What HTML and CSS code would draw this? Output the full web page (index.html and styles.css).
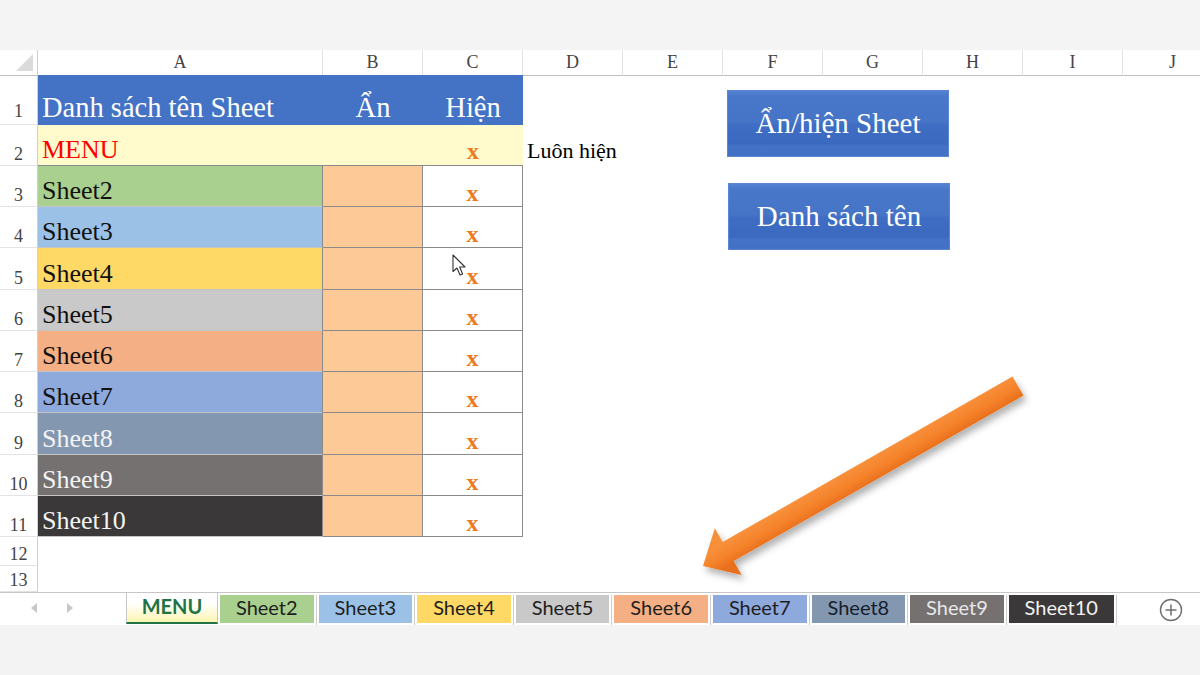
FILE: index.html
```html
<!DOCTYPE html>
<html lang="vi">
<head>
<meta charset="utf-8">
<title>Ẩn/hiện Sheet</title>
<link rel="stylesheet" href="styles.css">
</head>
<body>
<div class="app">
  <div class="topband"></div>
  <div class="sheet">
    <div class="colhead">
      <div class="corner"><span class="tri"></span></div>
      <div class="ch">A</div><div class="ch">B</div><div class="ch">C</div><div class="ch">D</div><div class="ch">E</div>
      <div class="ch">F</div><div class="ch">G</div><div class="ch">H</div><div class="ch">I</div><div class="ch">J</div>
    </div>

    <div class="row r1">
      <div class="rh">1</div>
      <div class="c a hd">Danh sách tên Sheet</div>
      <div class="c hd center">Ẩn</div>
      <div class="c hd center">Hiện</div>
      <div class="c"></div>
    </div>

    <div class="row r2">
      <div class="rh">2</div>
      <div class="c a y menu">MENU</div>
      <div class="c y"></div>
      <div class="c y center"><span class="x x2">x</span></div>
      <div class="c"><span class="note">Luôn hiện</span></div>
    </div>

    <div class="row tr"><div class="rh">3</div><div class="c a s2">Sheet2</div><div class="c b"></div><div class="c cc"><span class="x">x</span></div><div class="c"></div></div>
    <div class="row tr"><div class="rh">4</div><div class="c a s3">Sheet3</div><div class="c b"></div><div class="c cc"><span class="x">x</span></div><div class="c"></div></div>
    <div class="row tr"><div class="rh">5</div><div class="c a s4">Sheet4</div><div class="c b"></div><div class="c cc"><span class="x">x</span></div><div class="c"></div></div>
    <div class="row tr"><div class="rh">6</div><div class="c a s5">Sheet5</div><div class="c b"></div><div class="c cc"><span class="x">x</span></div><div class="c"></div></div>
    <div class="row tr"><div class="rh">7</div><div class="c a s6">Sheet6</div><div class="c b"></div><div class="c cc"><span class="x">x</span></div><div class="c"></div></div>
    <div class="row tr"><div class="rh">8</div><div class="c a s7">Sheet7</div><div class="c b"></div><div class="c cc"><span class="x">x</span></div><div class="c"></div></div>
    <div class="row tr"><div class="rh">9</div><div class="c a s8">Sheet8</div><div class="c b"></div><div class="c cc"><span class="x">x</span></div><div class="c"></div></div>
    <div class="row tr"><div class="rh">10</div><div class="c a s9">Sheet9</div><div class="c b"></div><div class="c cc"><span class="x">x</span></div><div class="c"></div></div>
    <div class="row tr"><div class="rh">11</div><div class="c a s10">Sheet10</div><div class="c b"></div><div class="c cc"><span class="x">x</span></div><div class="c"></div></div>

    <div class="row r12"><div class="rh">12</div></div>
    <div class="row r13"><div class="rh">13</div></div>

    <div class="btn btn1">Ẩn/hiện Sheet</div>
    <div class="btn btn2">Danh sách tên</div>
  </div>

  <div class="tabbar">
    <div class="nav"><span class="navl"></span><span class="navr"></span></div>
    <div class="tab active">MENU</div>
    <div class="tab t2 first">Sheet2</div><span class="sep"></span>
    <div class="tab t3">Sheet3</div><span class="sep"></span>
    <div class="tab t4">Sheet4</div><span class="sep"></span>
    <div class="tab t5">Sheet5</div><span class="sep"></span>
    <div class="tab t6">Sheet6</div><span class="sep"></span>
    <div class="tab t7">Sheet7</div><span class="sep"></span>
    <div class="tab t8">Sheet8</div><span class="sep"></span>
    <div class="tab t9">Sheet9</div><span class="sep"></span>
    <div class="tab t10 wide">Sheet10</div><span class="sep"></span>
    <div class="plus">
      <svg width="24" height="24" viewBox="0 0 24 24"><circle cx="12" cy="12" r="10.5" fill="none" stroke="#6e6e6e" stroke-width="1.4"/><path d="M12 6.5V17.5M6.5 12H17.5" stroke="#6e6e6e" stroke-width="1.5"/></svg>
    </div>
  </div>
  <div class="bottomband"></div>

  <svg class="arrow" width="1200" height="675" viewBox="0 0 1200 675">
    <defs>
      <filter id="sh" x="-10%" y="-10%" width="130%" height="140%">
        <feDropShadow dx="3" dy="5" stdDeviation="3.5" flood-color="#000" flood-opacity="0.3"/>
      </filter>
      <linearGradient id="ag" gradientUnits="userSpaceOnUse" x1="1012.5" y1="376.5" x2="1023.5" y2="395.5">
        <stop offset="0" stop-color="#f88f3a"/>
        <stop offset="0.55" stop-color="#f5822a"/>
        <stop offset="1" stop-color="#e86f1c"/>
      </linearGradient>
    </defs>
    <polygon filter="url(#sh)" fill="url(#ag)" points="1012.5,376.5 722.7,542.1 714.8,528.2 703,566 741.6,575 733.7,561.1 1023.5,395.5"/>
  </svg>

  <svg class="cursor" width="16" height="23" viewBox="0 0 16 23">
    <path d="M1 1 L1 17.5 L5 14 L8 21 L10.6 20 L7.7 13 L13 13 Z" fill="#fff" stroke="#333" stroke-width="1.1" stroke-linejoin="round"/>
  </svg>
</div>
</body>
</html>
```

FILE: styles.css
```css
* { box-sizing: border-box; }

body {
  margin: 0;
  width: 1200px;
  height: 675px;
  overflow: hidden;
  background: #f4f4f4;
  font-family: "Liberation Serif", "Times New Roman", serif;
}

.app {
  position: relative;
  width: 1200px;
  height: 675px;
  display: flex;
  flex-direction: column;
}

.topband { height: 50px; flex: none; background: #f4f4f4; }
.bottomband { flex: 1; background: #f3f3f3; }

.sheet {
  position: relative;
  height: 542px;
  flex: none;
  background: #fff;
  overflow: hidden;
}

/* column header */
.colhead {
  display: grid;
  grid-template-columns: 38px 285px repeat(9, 100px);
  height: 25px;
}
.corner {
  display: flex;
  justify-content: flex-end;
  align-items: flex-end;
  padding: 0 4px 4px 0;
  border-right: 1px solid #cfcfcf;
  border-bottom: 1px solid #bdbdbd;
}
.tri {
  width: 17px;
  height: 17px;
  background: #dadada;
  clip-path: polygon(100% 0, 100% 100%, 0 100%);
}
.ch {
  border-right: 1px solid #e3e3e3;
  border-bottom: 1px solid #bdbdbd;
  text-align: center;
  font-size: 18px;
  line-height: 25px;
  color: #444;
}

/* rows */
.row {
  display: grid;
  grid-template-columns: 38px 285px 100px 100px 1fr;
}
.rh {
  display: flex;
  align-items: flex-end;
  justify-content: center;
  border-right: 1px solid #cfcfcf;
  border-bottom: 1px solid #e3e3e3;
  font-size: 18px;
  line-height: 1;
  color: #444;
  padding-bottom: 2px;
}
.c {
  display: flex;
  align-items: flex-end;
  line-height: 1;
  white-space: nowrap;
}
.center { justify-content: center; }
.a { padding-left: 4px; }

.r1 { height: 50px; }
.r1 .rh { padding-bottom: 4px; }
.hd {
  background: #4472c4;
  color: #fff;
  font-size: 28.5px;
  padding-bottom: 3px;
}

.r2 { height: 41px; }
.y {
  background: #fffbcc;
  border-bottom: 1px solid #8a8a8a;
}
.menu {
  color: #ff0000;
  font-size: 26px;
  padding-bottom: 2px;
}
.x {
  color: #ee7b22;
  font-weight: bold;
  font-size: 24px;
}
.x2 { padding-bottom: 2px; }
.note {
  font-size: 22px;
  padding-left: 4px;
  padding-bottom: 4px;
}

.tr { height: 41.22px; }
.tr .a {
  font-size: 26px;
  color: #111;
  padding-bottom: 2px;
  border-right: 1px solid #8a8a8a;
  border-bottom: 1px solid #c4c4c4;
}
.tr .b {
  background: #fdc996;
  border-right: 1px solid #8a8a8a;
  border-bottom: 1px solid #8a8a8a;
}
.tr .cc {
  justify-content: center;
  padding-bottom: 1px;
  border-right: 1px solid #8a8a8a;
  border-bottom: 1px solid #8a8a8a;
}
.s2 { background: #a9d08e; }
.s3 { background: #9bc2e6; }
.s4 { background: #ffd966; }
.s5 { background: #c9c9c9; }
.s6 { background: #f4b084; }
.s7 { background: #8ea9db; }
.tr .s8 { background: #8497b0; color: #f4f4f4; }
.tr .s9 { background: #757171; color: #f4f4f4; }
.tr .s10 { background: #3a3838; color: #f4f4f4; }

.r12 { height: 29px; }
.r13 { height: 26px; }

/* floating buttons (shapes over the sheet) */
.btn {
  position: absolute;
  width: 222px;
  height: 67px;
  display: flex;
  align-items: center;
  justify-content: center;
  color: #fff;
  font-size: 29px;
  border: 1px solid #5a86d2;
  background: linear-gradient(180deg, #5382d2 0%, #4877ca 9%, #4675c8 47%, #3f6dc3 52%, #3b69c0 81%, #4472c7 85%, #4170c5 100%);
}
.btn1 { left: 727px; top: 40px; }
.btn2 { left: 728px; top: 133px; }

/* tab bar */
.tabbar {
  height: 33px;
  flex: none;
  display: flex;
  background: #fff;
  border-top: 1px solid #c6c6c6;
  font-family: Lato, "Open Sans", sans-serif;
}
.nav {
  width: 126px;
  display: flex;
  align-items: center;
  padding-left: 31px;
  padding-bottom: 2px;
  gap: 30px;
}
.navl {
  width: 0; height: 0;
  border-top: 5px solid transparent;
  border-bottom: 5px solid transparent;
  border-right: 6px solid #c8c8c8;
}
.navr {
  width: 0; height: 0;
  border-top: 5px solid transparent;
  border-bottom: 5px solid transparent;
  border-left: 6px solid #c8c8c8;
}
.tab {
  width: 93.6px;
  height: 28px;
  margin-top: 2px;
  padding-bottom: 4px;
  display: flex;
  align-items: center;
  justify-content: center;
  font-size: 20px;
  color: #1e1e1e;
  white-space: nowrap;
}
.tab.wide { width: 105px; }
.tab.active {
  width: 92px;
  height: 31px;
  margin-top: 0;
  padding-bottom: 3px;
  border-left: 1px solid #c6c6c6;
  border-right: 1px solid #c6c6c6;
  border-bottom: 2px solid #217346;
  background: linear-gradient(180deg, #ffffff 35%, #fff5b0 100%);
  color: #217346;
  font-weight: 700;
}
.tab.first { margin-left: 2px; }
.sep {
  width: 1px;
  margin: 2px 2px 0;
  background: #cfcfcf;
}
.t2 { background: #a9d08e; }
.t3 { background: #9bc2e6; }
.t4 { background: #ffd966; }
.t5 { background: #c9c9c9; }
.t6 { background: #f4b084; }
.t7 { background: #8ea9db; }
.t8 { background: #8497b0; color: #16202c; }
.t9 { background: #757171; color: #e8e8e8; }
.t10 { background: #3a3838; color: #f2f2f2; }
.plus {
  margin-left: auto;
  margin-right: 17px;
  padding-top: 2px;
  display: flex;
  align-items: center;
}
.plus svg { display: block; }

/* overlays */
.arrow {
  position: absolute;
  left: 0;
  top: 0;
  pointer-events: none;
}
.cursor {
  position: absolute;
  left: 452px;
  top: 254px;
  pointer-events: none;
}
```
